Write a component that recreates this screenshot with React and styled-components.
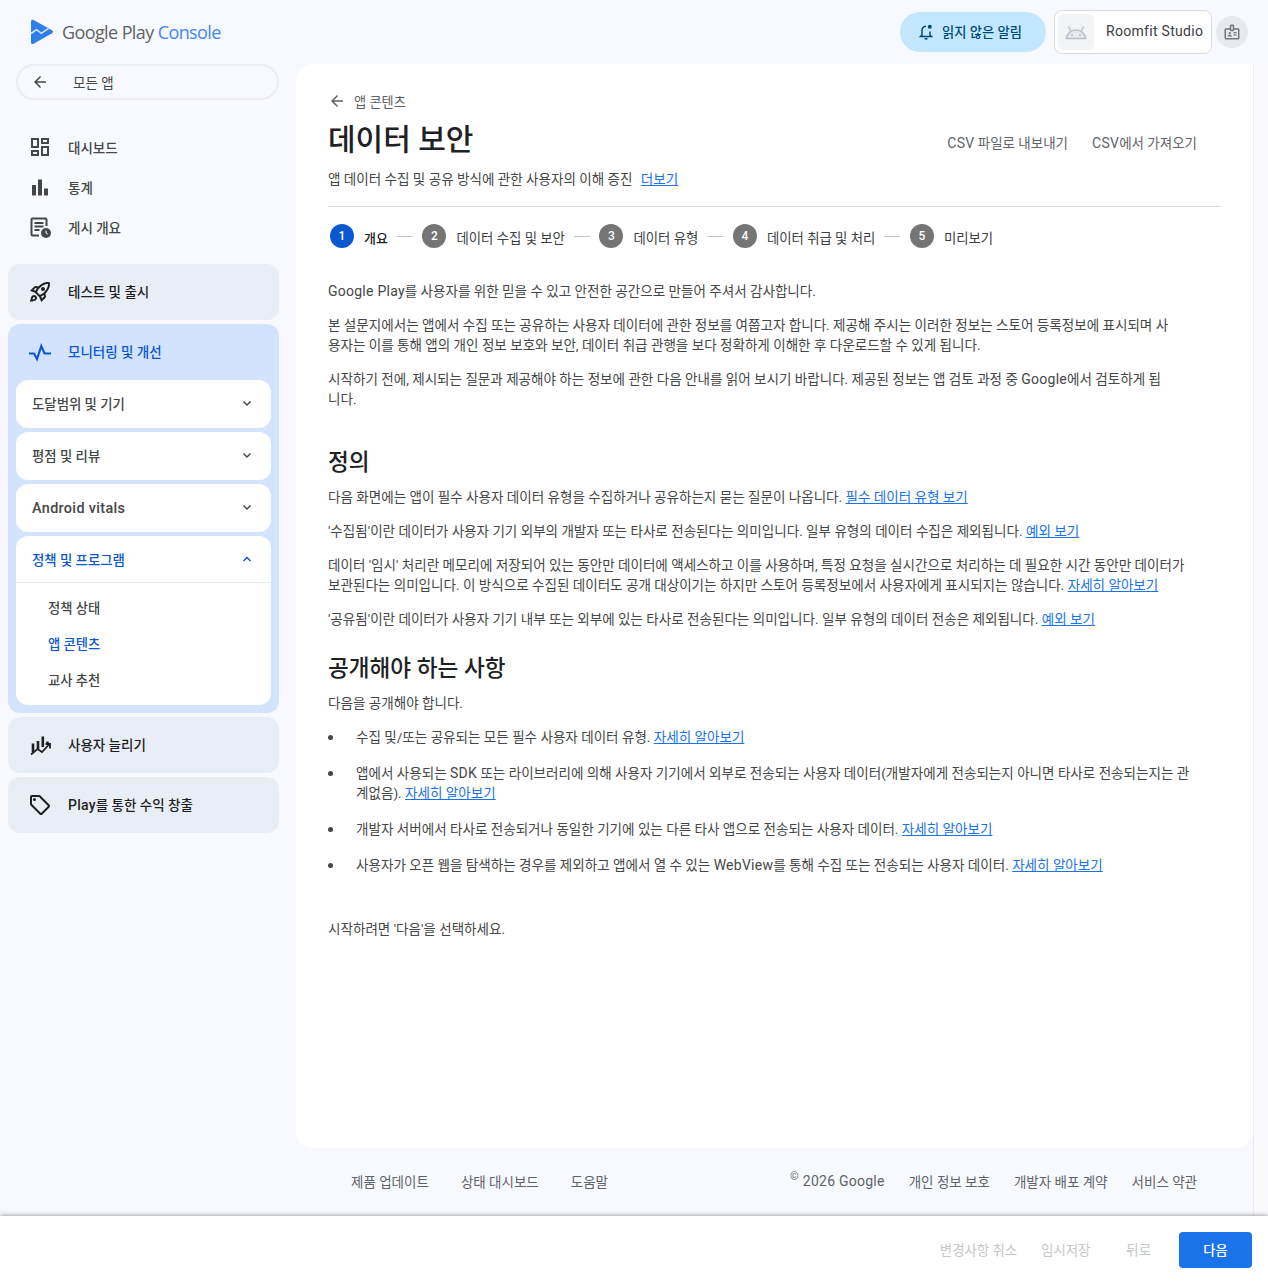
import React from "react";
import styled, { createGlobalStyle } from "styled-components";
import { MdOutlineDashboard, MdOutlineRocketLaunch, MdOutlineLocalOffer, MdOutlineBadge } from "react-icons/md";

const GlobalStyle = createGlobalStyle`
  html, body { margin: 0; padding: 0; }
  body {
    background: #f8f9fe;
    font-family: Roboto, "Noto Sans CJK KR", sans-serif;
    color: #3c4043;
  }
  * { box-sizing: border-box; }
`;

const Page = styled.div`
  width: 1268px;
  height: 1284px;
  display: flex;
  flex-direction: column;
  overflow: hidden;
`;

const Header = styled.header`
  height: 64px;
  flex: none;
  display: flex;
  align-items: center;
  justify-content: space-between;
  padding: 0 20px 0 30px;
`;

const Logo = styled.div`
  display: flex;
  align-items: center;
  gap: 8px;
`;

const LogoText = styled.span`
  font-family: "Open Sans", Roboto, sans-serif;
  font-size: 18px;
  letter-spacing: -0.6px;
  color: #5f6368;
  span { color: #4285f4; }
`;

const HeaderRight = styled.div`
  display: flex;
  align-items: center;
`;

const AlertPill = styled.div`
  width: 146px;
  height: 40px;
  border-radius: 20px;
  background: #c2e7ff;
  color: #004a77;
  display: flex;
  align-items: center;
  gap: 7px;
  padding-left: 17px;
  font-size: 13.3px;
  font-weight: 500;
  margin-right: 8px;
`;

const Raised = styled.span`
  padding-bottom: 2px;
`;

const AppChip = styled.div`
  width: 158px;
  height: 44px;
  border: 1px solid #dadce0;
  border-radius: 8px;
  background: #fff;
  display: flex;
  align-items: center;
  padding-left: 3px;
  font-size: 14px;
  letter-spacing: 0.3px;
  color: #3c4043;
  gap: 12px;
  margin-right: 4px;
`;

const AppThumb = styled.div`
  width: 36px;
  height: 36px;
  border-radius: 6px;
  background: #f1f3f4;
  display: flex;
  align-items: center;
  justify-content: center;
`;

const RoundIcon = styled.div`
  width: 32px;
  height: 32px;
  border-radius: 50%;
  background: #e8eaed;
  color: #70757a;
  display: flex;
  align-items: center;
  justify-content: center;
`;

const Body = styled.div`
  flex: 1;
  min-height: 0;
  display: flex;
`;

const Sidebar = styled.nav`
  width: 296px;
  flex: none;
  padding: 0 17px 0 8px;
`;

const BackPill = styled.div`
  margin: 0 0 0 8px;
  height: 36px;
  border: 2px solid #e9eef6;
  border-radius: 18px;
  display: flex;
  align-items: center;
  padding: 0 0 1px 13px;
  gap: 24px;
  font-size: 13.5px;
  color: #444746;
`;

const TopNav = styled.div`
  padding: 27px 0 17px;
`;

const IconSlot = styled.span`
  width: 24px;
  height: 24px;
  flex: none;
  display: flex;
  align-items: center;
  justify-content: center;
`;

const TopItem = styled.div`
  height: 40px;
  display: flex;
  align-items: center;
  gap: 16px;
  padding-left: 20px;
  font-size: 13.5px;
  font-weight: 500;
  color: #444746;
`;

const Group = styled.div`
  background: ${({ $open }) => ($open ? "#d3e3fd" : "#e9eef6")};
  border-radius: 12px;
  margin-bottom: 4px;
  padding: ${({ $open }) => ($open ? "0 8px 8px" : "0")};
`;

const GroupHead = styled.div`
  height: 56px;
  display: flex;
  align-items: center;
  gap: 16px;
  padding-left: ${({ $open }) => ($open ? "12px" : "20px")};
  font-size: 13.5px;
  font-weight: 500;
  color: ${({ $open }) => ($open ? "#0b57d0" : "#1f1f1f")};
`;

const SubCard = styled.div`
  background: #fff;
  border-radius: 12px;
  & + & { margin-top: 4px; }
`;

const SubHead = styled.div`
  height: ${({ $open }) => ($open ? "47px" : "48px")};
  display: flex;
  align-items: center;
  justify-content: space-between;
  padding: ${({ $open }) => ($open ? "0 16px" : "0 16px 2px")};
  font-size: 13.4px;
  font-weight: 500;
  color: ${({ $open }) => ($open ? "#0b57d0" : "#444746")};
  border-bottom: ${({ $open }) => ($open ? "1px solid #e9eef6" : "none")};
`;

const SubList = styled.div`
  padding: 7px 0;
`;

const SubItem = styled.div`
  height: 36px;
  padding: 0 0 1px 32px;
  display: flex;
  align-items: center;
  font-size: 13.3px;
  font-weight: 500;
  color: ${({ $active }) => ($active ? "#0b57d0" : "#444746")};
`;

const Main = styled.main`
  flex: 1;
  min-width: 0;
  display: flex;
`;

const MainColumn = styled.div`
  width: 957px;
  display: flex;
  flex-direction: column;
`;

const ScrollStrip = styled.div`
  flex: 1;
  border-left: 1px solid #ececf0;
  background: #fafafc;
`;

const Card = styled.section`
  height: 1084px;
  background: #fff;
  border-radius: 16px 0 16px 16px;
  padding: 28px 32px 0;
`;

const BackLink = styled.div`
  display: flex;
  align-items: center;
  gap: 8px;
  height: 18px;
  font-size: 13.2px;
  color: #5f6368;
`;

const TitleRow = styled.div`
  display: flex;
  align-items: center;
  justify-content: space-between;
  margin-top: 9px;
  height: 42px;
`;

const Title = styled.h1`
  margin: 0;
  font-size: 30px;
  font-weight: 500;
  line-height: 42px;
  color: #202124;
`;

const TitleActions = styled.div`
  display: flex;
  gap: 24px;
  padding: 4px 24px 0 0;
`;

const TextAction = styled.span`
  font-size: 13.5px;
  color: #5f6368;
`;

const BottomAction = styled.span`
  font-size: 13.4px;
  padding-bottom: 2px;
  margin-left: ${({ $push }) => ($push ? "12px" : "0")};
  color: #c4c7c9;
`;

const Latin = styled.span`
  font-size: 14px;
  letter-spacing: 0.25px;
`;

const VitalsLabel = styled.span`
  font-size: 14.4px;
  letter-spacing: 0.35px;
  padding-top: 2px;
`;

const Subtitle = styled.p`
  margin: 8px 0 0;
  font-size: 13.55px;
  line-height: 20px;
  color: #444746;
`;

const Link = styled.a`
  color: #1a73e8;
  text-decoration: underline;
  margin-left: ${({ $gap }) => ($gap ? "5px" : "0")};
`;

const Divider = styled.div`
  height: 1px;
  background: #dadce0;
  margin-top: 17px;
`;

const Stepper = styled.ol`
  list-style: none;
  margin: 17px 0 0;
  padding: 0 0 0 2px;
  display: flex;
  align-items: center;
  height: 24px;
`;

const Step = styled.li`
  display: flex;
  align-items: center;
  font-size: ${({ $active }) => ($active ? "13px" : "13.4px")};
  font-weight: ${({ $active }) => ($active ? 500 : 400)};
  color: ${({ $active }) => ($active ? "#202124" : "#3c4043")};
`;

const StepLabel = styled.span`
  padding-top: 2px;
`;

const StepDot = styled.span`
  width: 24px;
  height: 24px;
  border-radius: 50%;
  background: ${({ $active }) => ($active ? "#0b57d0" : "#757575")};
  color: #fff;
  font-size: 12px;
  font-weight: 500;
  display: flex;
  align-items: center;
  justify-content: center;
  margin-right: 10px;
`;

const StepLine = styled.span`
  width: 16px;
  height: 1px;
  background: #c4c7c5;
  margin: 0 9.5px 0 9px;
`;

const Prose = styled.div`
  margin-top: 33px;
  font-size: 13.55px;
  line-height: 20px;
  color: #444746;
  width: 845px;
  p { margin: 0 0 14px; }
`;

const Heading = styled.h2`
  margin: ${({ $top }) => $top}px 0 8px;
  font-size: 22.6px;
  line-height: 32px;
  font-weight: 500;
  color: #202124;
`;

const Section = styled.div`
  font-size: 13.55px;
  line-height: 20px;
  color: #444746;
  width: 862px;
  p { margin: 0 0 14px; }
`;

const Bullets = styled.ul`
  list-style: none;
  margin: 0 0 44px;
  padding: 0;
`;

const Bullet = styled.li`
  position: relative;
  padding-left: 28px;
  margin-bottom: 16px;
  &::before {
    content: "";
    position: absolute;
    left: 0;
    top: 8px;
    width: 5px;
    height: 5px;
    border-radius: 50%;
    background: #444746;
  }
`;

const Footer = styled.footer`
  height: 68px;
  display: flex;
  align-items: center;
  justify-content: space-between;
  padding: 0 56px 2px 55px;
  font-size: 13.5px;
  color: #5f6368;
`;

const FooterLinks = styled.div`
  display: flex;
  align-items: center;
  gap: ${({ $gap }) => $gap}px;
`;

const Copyright = styled.span`
  font-size: 14px;
  letter-spacing: 0.25px;
  sup {
    font-size: 11px;
    line-height: 0;
    margin-right: 4px;
  }
`;

const BottomBar = styled.div`
  height: 68px;
  flex: none;
  background: #fff;
  box-shadow: 0 -1px 4px rgba(60, 64, 67, 0.45);
  display: flex;
  align-items: center;
  justify-content: flex-end;
  padding: 0 16px 0 0;
  gap: 24px;
  position: relative;
`;

const PrimaryButton = styled.button`
  width: 73px;
  height: 36px;
  border: none;
  border-radius: 4px;
  background: #1a73e8;
  color: #fff;
  font: 500 13.2px Roboto, "Noto Sans CJK KR", sans-serif;
  margin-left: 4px;
  padding: 0 0 2px;
`;

const Arrow = ({ size = 18, color = "#444746" }) => (
  <svg width={size} height={size} viewBox="0 0 24 24" fill={color}>
    <path d="M20 11H7.830l5.590-5.590L12 4l-8 8 8 8 1.410-1.410L7.830 13H20v-2z" />
  </svg>
);

const Chevron = ({ up, color = "#444746" }) => (
  <svg width="16" height="16" viewBox="0 0 16 16" fill="none" stroke={color} strokeWidth="1.5">
    <path d={up ? "M4.5 10 8 6.500 11.500 10" : "M4.500 6.500 8 10l3.500-3.500"} />
  </svg>
);

const PlayLogo = () => (
  <svg width="24" height="26" viewBox="0 0 24 26">
    <path
      d="M1 2.500C1 1 2.300.3 3.600 1l18.400 10.300c1.300.8 1.300 2.200 0 3L3.600 24.800C2.300 25.500 1 24.800 1 23.400z"
      fill="#2f7fea"
    />
    <path d="M1 14.500l5.500-3.800 4.800 3.600 7.200-5" fill="none" stroke="#d6e6fc" strokeWidth="1.600" />
  </svg>
);

const StatsIcon = () => (
  <svg width="24" height="24" viewBox="0 0 24 24" fill="#444746">
    <rect x="4" y="10" width="4" height="10.500" />
    <rect x="10" y="4.500" width="4" height="16" />
    <rect x="16" y="13.500" width="4" height="7" />
  </svg>
);

const OverviewIcon = () => (
  <svg width="24" height="24" viewBox="0 0 24 24">
    <path
      d="M18.500 11V4.500a1 1 0 0 0-1-1h-13a1 1 0 0 0-1 1v15a1 1 0 0 0 1 1H11"
      fill="none"
      stroke="#444746"
      strokeWidth="2"
    />
    <path d="M6.500 8h9M6.500 11.500h9M6.500 15h5" stroke="#444746" strokeWidth="2" />
    <circle cx="18" cy="18" r="5" fill="#444746" />
    <path d="M18 15.500V18l1.800 1.200" stroke="#fff" strokeWidth="1" fill="none" />
  </svg>
);

const VitalsIcon = () => (
  <svg width="24" height="24" viewBox="0 0 24 24" fill="none" stroke="#0b57d0" strokeWidth="2.200">
    <path d="M1 13.500h5l3 5.500 4.300-13 3.200 7.500H23" />
  </svg>
);

const GrowIcon = () => (
  <svg width="24" height="24" viewBox="0 0 24 24" fill="none" stroke="#1f1f1f">
    <path d="M5 10.500V19M10 8v8.500M14.800 3.500V14M19.500 8.500v3" strokeWidth="2.600" />
    <path d="M3 21.500l6.500-5.500 4.500 3 7-7.500" strokeWidth="1.800" />
    <path d="M17.500 11h4.500v4.500" strokeWidth="1.800" />
  </svg>
);

const BellIcon = () => (
  <svg width="18" height="18" viewBox="0 0 18 18" fill="none" stroke="#004a77" strokeWidth="1.500">
    <path d="M9 3.200C6.500 3.500 5 5.200 5 7.500V12l-1.500 1.500h11L13 12V8.500" />
    <path d="M7.500 15.800h3" />
    <circle cx="12.800" cy="3.800" r="2" fill="#004a77" stroke="none" />
  </svg>
);

const AndroidIcon = () => (
  <svg width="24" height="18" viewBox="0 0 24 18" fill="none" stroke="#bdc1c6" strokeWidth="1.500">
    <path d="M2.500 15.500c.5-5 4.300-8.500 9.500-8.500s9 3.500 9.500 8.500z" fill="#e8eaed" />
    <path d="M7 8.500 4.500 3.500M17 8.500l2.500-5" />
    <circle cx="8" cy="12" r="1" fill="#bdc1c6" stroke="none" />
    <circle cx="16" cy="12" r="1" fill="#bdc1c6" stroke="none" />
  </svg>
);

const topNav = [
  { label: "대시보드", icon: <MdOutlineDashboard size={24} /> },
  { label: "통계", icon: <StatsIcon /> },
  { label: "게시 개요", icon: <OverviewIcon /> },
];

const steps = ["개요", "데이터 수집 및 보안", "데이터 유형", "데이터 취급 및 처리", "미리보기"];

export default function App() {
  return (
    <Page>
      <GlobalStyle />
      <Header>
        <Logo>
          <PlayLogo />
          <LogoText>
            Google Play <span>Console</span>
          </LogoText>
        </Logo>
        <HeaderRight>
          <AlertPill>
            <BellIcon />
            <Raised>읽지 않은 알림</Raised>
          </AlertPill>
          <AppChip>
            <AppThumb>
              <AndroidIcon />
            </AppThumb>
            <Raised>Roomfit Studio</Raised>
          </AppChip>
          <RoundIcon>
            <MdOutlineBadge size={18} />
          </RoundIcon>
        </HeaderRight>
      </Header>
      <Body>
        <Sidebar>
          <BackPill>
            <Arrow />
            모든 앱
          </BackPill>
          <TopNav>
            {topNav.map((item) => (
              <TopItem key={item.label}>
                <IconSlot>{item.icon}</IconSlot>
                {item.label}
              </TopItem>
            ))}
          </TopNav>
          <Group>
            <GroupHead>
              <IconSlot>
                <MdOutlineRocketLaunch size={24} />
              </IconSlot>
              <Raised>테스트 및 출시</Raised>
            </GroupHead>
          </Group>
          <Group $open>
            <GroupHead $open>
              <IconSlot>
                <VitalsIcon />
              </IconSlot>
              <Raised>모니터링 및 개선</Raised>
            </GroupHead>
            <SubCard>
              <SubHead>
                도달범위 및 기기
                <Chevron />
              </SubHead>
            </SubCard>
            <SubCard>
              <SubHead>
                평점 및 리뷰
                <Chevron />
              </SubHead>
            </SubCard>
            <SubCard>
              <SubHead>
                <VitalsLabel>Android vitals</VitalsLabel>
                <Chevron />
              </SubHead>
            </SubCard>
            <SubCard>
              <SubHead $open>
                정책 및 프로그램
                <Chevron up color="#0b57d0" />
              </SubHead>
              <SubList>
                <SubItem>정책 상태</SubItem>
                <SubItem $active>앱 콘텐츠</SubItem>
                <SubItem>교사 추천</SubItem>
              </SubList>
            </SubCard>
          </Group>
          <Group>
            <GroupHead>
              <IconSlot>
                <GrowIcon />
              </IconSlot>
              <Raised>사용자 늘리기</Raised>
            </GroupHead>
          </Group>
          <Group>
            <GroupHead>
              <IconSlot>
                <MdOutlineLocalOffer size={24} />
              </IconSlot>
              <Raised>
                <Latin>Play</Latin>를 통한 수익 창출
              </Raised>
            </GroupHead>
          </Group>
        </Sidebar>
        <Main>
          <MainColumn>
            <Card>
              <BackLink>
                <Arrow color="#5f6368" />
                앱 콘텐츠
              </BackLink>
              <TitleRow>
                <Title>데이터 보안</Title>
                <TitleActions>
                  <TextAction>
                    <Latin>CSV</Latin> 파일로 내보내기
                  </TextAction>
                  <TextAction>
                    <Latin>CSV</Latin>에서 가져오기
                  </TextAction>
                </TitleActions>
              </TitleRow>
              <Subtitle>
                앱 데이터 수집 및 공유 방식에 관한 사용자의 이해 증진 <Link $gap>더보기</Link>
              </Subtitle>
              <Divider />
              <Stepper>
                {steps.map((label, i) => (
                  <React.Fragment key={label}>
                    <Step $active={i === 0}>
                      <StepDot $active={i === 0}>{i + 1}</StepDot>
                      <StepLabel>{label}</StepLabel>
                    </Step>
                    {i < steps.length - 1 && <StepLine />}
                  </React.Fragment>
                ))}
              </Stepper>
              <Prose>
                <p>
                  <Latin>Google Play</Latin>를 사용자를 위한 믿을 수 있고 안전한 공간으로 만들어 주셔서 감사합니다.
                </p>
                <p>
                  본 설문지에서는 앱에서 수집 또는 공유하는 사용자 데이터에 관한 정보를 여쭙고자 합니다. 제공해 주시는 이러한 정보는 스토어
                  등록정보에 표시되며 사용자는 이를 통해 앱의 개인 정보 보호와 보안, 데이터 취급 관행을 보다 정확하게 이해한 후 다운로드할 수
                  있게 됩니다.
                </p>
                <p>
                  시작하기 전에, 제시되는 질문과 제공해야 하는 정보에 관한 다음 안내를 읽어 보시기 바랍니다. 제공된 정보는 앱 검토 과정 중{" "}
                  <Latin>Google</Latin>에서 검토하게 됩니다.
                </p>
              </Prose>
              <Heading $top={38}>정의</Heading>
              <Section>
                <p>
                  다음 화면에는 앱이 필수 사용자 데이터 유형을 수집하거나 공유하는지 묻는 질문이 나옵니다. <Link>필수 데이터 유형 보기</Link>
                </p>
                <p>
                  '수집됨'이란 데이터가 사용자 기기 외부의 개발자 또는 타사로 전송된다는 의미입니다. 일부 유형의 데이터 수집은 제외됩니다.{" "}
                  <Link>예외 보기</Link>
                </p>
                <p>
                  데이터 '임시' 처리란 메모리에 저장되어 있는 동안만 데이터에 액세스하고 이를 사용하며, 특정 요청을 실시간으로 처리하는 데 필요한
                  시간 동안만 데이터가 보관된다는 의미입니다. 이 방식으로 수집된 데이터도 공개 대상이기는 하지만 스토어 등록정보에서 사용자에게
                  표시되지는 않습니다. <Link>자세히 알아보기</Link>
                </p>
                <p>
                  '공유됨'이란 데이터가 사용자 기기 내부 또는 외부에 있는 타사로 전송된다는 의미입니다. 일부 유형의 데이터 전송은 제외됩니다.{" "}
                  <Link>예외 보기</Link>
                </p>
              </Section>
              <Heading $top={24}>공개해야 하는 사항</Heading>
              <Section>
                <p>다음을 공개해야 합니다.</p>
                <Bullets>
                  <Bullet>
                    수집 및/또는 공유되는 모든 필수 사용자 데이터 유형. <Link>자세히 알아보기</Link>
                  </Bullet>
                  <Bullet>
                    앱에서 사용되는 <Latin>SDK</Latin> 또는 라이브러리에 의해 사용자 기기에서 외부로 전송되는 사용자 데이터(개발자에게 전송되는지
                    아니면 타사로 전송되는지는 관계없음). <Link>자세히 알아보기</Link>
                  </Bullet>
                  <Bullet>
                    개발자 서버에서 타사로 전송되거나 동일한 기기에 있는 다른 타사 앱으로 전송되는 사용자 데이터. <Link>자세히 알아보기</Link>
                  </Bullet>
                  <Bullet>
                    사용자가 오픈 웹을 탐색하는 경우를 제외하고 앱에서 열 수 있는 <Latin>WebView</Latin>를 통해 수집 또는 전송되는 사용자 데이터.{" "}
                    <Link>자세히 알아보기</Link>
                  </Bullet>
                </Bullets>
                <p>시작하려면 '다음'을 선택하세요.</p>
              </Section>
            </Card>
            <Footer>
              <FooterLinks $gap={32}>
                <span>제품 업데이트</span>
                <span>상태 대시보드</span>
                <span>도움말</span>
              </FooterLinks>
              <FooterLinks $gap={24}>
                <Copyright>
                  <sup>©</sup>2026 Google
                </Copyright>
                <span>개인 정보 보호</span>
                <span>개발자 배포 계약</span>
                <span>서비스 약관</span>
              </FooterLinks>
            </Footer>
          </MainColumn>
          <ScrollStrip />
        </Main>
      </Body>
      <BottomBar>
        <BottomAction>변경사항 취소</BottomAction>
        <BottomAction>임시저장</BottomAction>
        <BottomAction $push>뒤로</BottomAction>
        <PrimaryButton>다음</PrimaryButton>
      </BottomBar>
    </Page>
  );
}
